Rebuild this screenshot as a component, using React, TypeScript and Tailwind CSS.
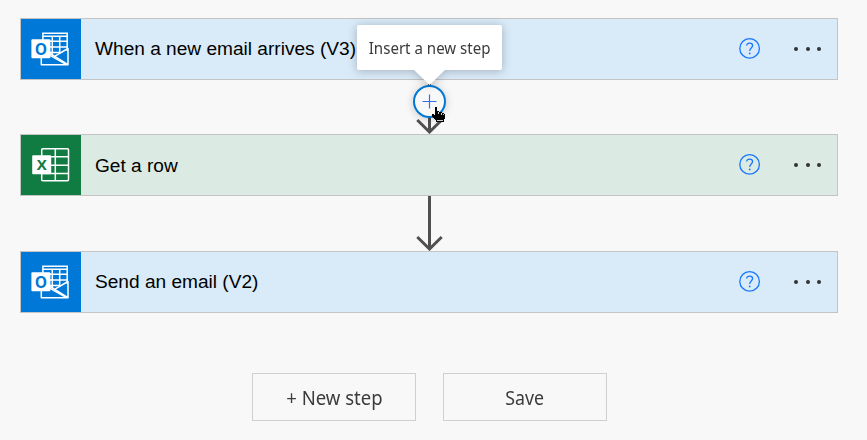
import type { ReactNode } from "react";

function OutlookIcon() {
  return (
    <svg width="60" height="60" viewBox="0 0 60 60" fill="none" stroke="#fff" strokeWidth="1.5">
      <path d="M21.9 22V14.2H46.2V32M22 17.3H46M28 22.3H46M28 28H46M28 33.4H39M31.3 17V36M38.7 17V34" />
      <path d="M20.3 38V45.7H47V29.5L33.5 37.3M29 34.5L46.6 45.3" strokeLinejoin="round" />
      <path d="M29 36.3L45.5 45.6" />
      <rect x="10.4" y="20.3" width="19" height="19" rx="1" fill="#fff" stroke="none" />
      <text x="19.9" y="35.6" textAnchor="middle" fontSize="15.5" fontWeight="700" fill="#0078d7" stroke="none" className="font-['Open_Sans',sans-serif]">O</text>
    </svg>
  );
}

function ExcelIcon() {
  return (
    <svg width="60" height="60" viewBox="0 0 60 60" fill="none" stroke="#fff" strokeWidth="1.5">
      <rect x="20.7" y="13.7" width="26.8" height="32" rx="1" />
      <path d="M34.3 14V46M21 21.7H47M29 30.2H47M21 38.6H47" />
      <rect x="11.2" y="20.3" width="19" height="19" rx="1" fill="#fff" stroke="none" />
      <text x="20.7" y="35.2" textAnchor="middle" fontSize="15" fontWeight="700" fill="#107c41" stroke="none" className="font-['Open_Sans',sans-serif]">X</text>
    </svg>
  );
}

function Step({ title, icon, green }: { title: string; icon: ReactNode; green?: boolean }) {
  return (
    <div className={`flex h-[62px] w-[818px] items-center border border-[#c4c4c4] ${green ? "bg-[#dbeae2]" : "bg-[#d9eaf8]"}`}>
      <div className={`size-[60px] shrink-0 ${green ? "bg-[#107c41]" : "bg-[#0078d7]"}`}>{icon}</div>
      <span className={`ml-3.5 flex-1 whitespace-nowrap text-[19.1px] text-black ${green ? "pt-0.5" : ""}`}>{title}</span>
      <svg className="mb-0.5 mr-[32px]" width="24" height="24" viewBox="0 0 24 24" fill="none" stroke="#1677ff" strokeWidth="1.3">
        <circle cx="11.6" cy="12.4" r="9.8" />
        <path d="M8.7 9.6C8.7 8 9.9 7.1 11.6 7.1S14.6 8.1 14.6 9.6C14.6 11.9 11.7 12 11.7 14.9" />
        <circle cx="11.7" cy="17.4" r=".9" fill="#1677ff" stroke="none" />
      </svg>
      <div className="mr-[16px] flex gap-[7.3px]">
        <i className="size-1 rounded-full bg-[#333]" />
        <i className="size-1 rounded-full bg-[#333]" />
        <i className="size-1 rounded-full bg-[#333]" />
      </div>
    </div>
  );
}

function Arrow() {
  return (
    <svg className="block" width="30" height="55" viewBox="0 0 30 55" fill="none" stroke="#505050" strokeWidth="3">
      <path d="M15.5 0V53M3.3 41L15.5 53L27.7 41" />
    </svg>
  );
}

function Cursor() {
  return (
    <svg className="absolute left-[432px] top-[107px]" width="14" height="16" viewBox="0 0 14 16" shapeRendering="crispEdges">
      <path d="M3 0H5V4H7V5H10V6H12V7H13V12H12V15H4V13H3V12H2V11H1V10H0V7H2V8H3Z" fill="#000" />
      <path d="M6.5 5V7M9.5 6V8M11.5 7V8M5 13.5H11" stroke="#fff" strokeWidth="1" strokeOpacity=".8" />
    </svg>
  );
}

export default function App() {
  return (
    <main className="relative h-[440px] w-[867px] bg-[#f8f8f8] pl-5 pt-[18px] font-['Liberation_Sans',Arial,sans-serif]">
      <Step title="When a new email arrives (V3)" icon={<OutlookIcon />} />
      <div className="flex h-[54px] w-[818px] items-end justify-center overflow-hidden"><Arrow /></div>
      <Step title="Get a row" icon={<ExcelIcon />} green />
      <div className="flex h-[55px] w-[818px] justify-center"><Arrow /></div>
      <Step title="Send an email (V2)" icon={<OutlookIcon />} />
      <div className="mt-[60px] flex gap-[27px] pl-[232px] font-['Noto_Sans',sans-serif] text-[19px] text-[#3b3b3b]">
        <button className="h-12 w-[164px] border border-[#d0d0d0] pt-[3px]"><span className="inline-block scale-x-[.975] whitespace-nowrap">+ New step</span></button>
        <button className="h-12 w-[164px] border border-[#d0d0d0] pt-[3px]"><span className="inline-block scale-x-[.935]">Save</span></button>
      </div>
      <button className="absolute left-[413px] top-[85px] size-[33px] rounded-full border-2 border-[#0078d7] bg-[#f8f8f8] shadow-[0_1px_8px_rgba(0,0,0,.2)]">
        <svg className="block" width="29" height="29" viewBox="0 0 29 29" stroke="#3370e8" strokeWidth="1.2">
          <path d="M14.5 7.5V21.5M7.5 14.5H21.5" />
        </svg>
      </button>
      <div className="absolute left-[357px] top-[25px] flex h-[45px] w-[145px] items-center justify-center rounded-[2px] bg-white font-['Noto_Sans',sans-serif] text-[15.5px] text-[#3b3b3b] drop-shadow-[0_1px_5px_rgba(0,0,0,.25)]">
        <span className="scale-x-[.972] whitespace-nowrap pt-0.5">Insert a new step</span>
        <svg className="absolute left-[57px] top-[45px]" width="31" height="15" viewBox="0 0 31 15"><path d="M0 0H31L15.5 15Z" fill="#fff" /></svg>
      </div>
      <Cursor />
    </main>
  );
}
